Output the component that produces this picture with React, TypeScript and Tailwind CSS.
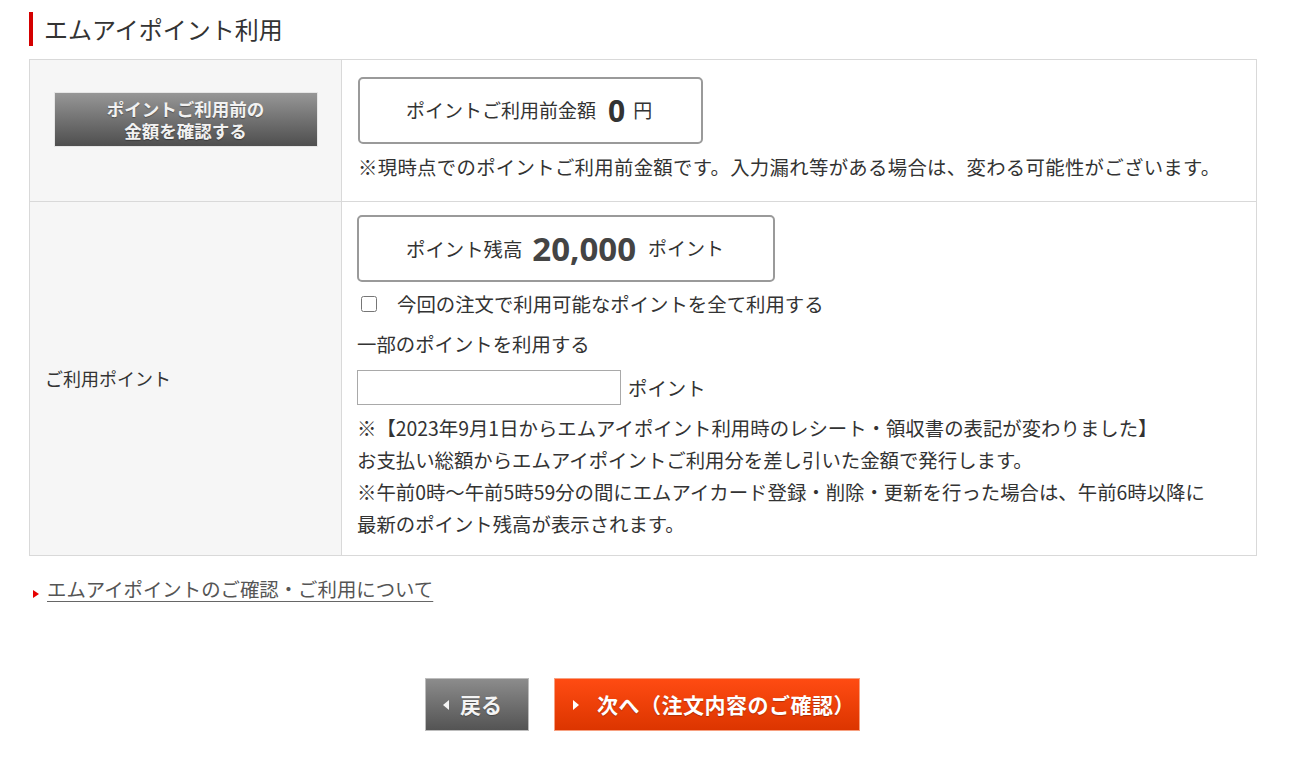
import { useState } from "react";

export default function App() {
  const [useAll, setUseAll] = useState(false);
  const [points, setPoints] = useState("");

  return (
    <div className="min-h-[763px] bg-white text-[#333] font-['Noto_Sans_CJK_JP','Noto_Sans',sans-serif]">
      <div className="pt-[12px] pl-[29px] pr-[49px]">
        {/* Title */}
        <h2 className="border-l-4 border-[#d40000] pl-[11px] h-[34px] leading-[34px] text-[24px] font-normal">
          エムアイポイント利用
        </h2>

        {/* Table */}
        <div className="mt-[13px] border border-[#d9d9d9]">
          {/* Row 1 */}
          <div className="flex border-b border-[#d9d9d9]">
            <div className="w-[312px] shrink-0 bg-[#f6f6f6] border-r border-[#d9d9d9] flex justify-center pt-[32px]">
              <button className="w-[264px] h-[55px] bg-gradient-to-b from-[#979797] to-[#4f4f4f] text-[#f2f2f2] text-[17.5px] font-bold leading-[22px] border border-[#e6e6e6] [text-shadow:0_1px_1px_rgba(0,0,0,0.35)]">
                ポイントご利用前の
                <br />
                金額を確認する
              </button>
            </div>
            <div className="flex-1 pl-[16px] pt-[17px] pb-[18px] text-[19.4px]">
              <div className="w-[345px] h-[67px] border-2 border-[#9a9a9a] rounded-[5px] flex items-center pl-[46px]">
                <span className="text-[19px]">ポイントご利用前金額</span>
                <span className="ml-[12px] text-[30px] font-bold leading-none font-['Open_Sans','Noto_Sans',sans-serif]">0</span>
                <span className="ml-[8px] text-[19px]">円</span>
              </div>
              <p className="mt-[7px] leading-[32px] tracking-[0.3px]">
                ※現時点でのポイントご利用前金額です。入力漏れ等がある場合は、変わる可能性がございます。
              </p>
            </div>
          </div>

          {/* Row 2 */}
          <div className="flex">
            <div className="w-[312px] shrink-0 bg-[#f6f6f6] border-r border-[#d9d9d9] flex items-center pl-[15px] text-[18px]">
              ご利用ポイント
            </div>
            <div className="flex-1 pl-[15px] pt-[13px] pb-[15px] text-[19.4px]">
              <div className="w-[418px] h-[67px] border-2 border-[#9a9a9a] rounded-[5px] flex items-center pl-[47px]">
                <span className="text-[19.4px]">ポイント残高</span>
                <span className="ml-[10px] text-[33px] font-bold leading-none text-[#444] font-['Open_Sans','Noto_Sans',sans-serif]">
                  20,000
                </span>
                <span className="ml-[12px] text-[19px]">ポイント</span>
              </div>
              <label className="mt-[6px] flex items-center h-[32px] pl-[4px]">
                <input
                  type="checkbox"
                  checked={useAll}
                  onChange={(e) => setUseAll(e.target.checked)}
                  className="w-[16px] h-[16px] m-0"
                />
                <span className="ml-[20px]">今回の注文で利用可能なポイントを全て利用する</span>
              </label>
              <p className="mt-[8px] leading-[32px]">一部のポイントを利用する</p>
              <div className="mt-[10px] flex items-center">
                <input
                  type="text"
                  value={points}
                  onChange={(e) => setPoints(e.target.value)}
                  className="w-[264px] h-[35px] border border-[#a9a9a9] outline-none px-2"
                />
                <span className="ml-[7px]">ポイント</span>
              </div>
              <div className="mt-[7px] leading-[32px]">
                <p>※【2023年9月1日からエムアイポイント利用時のレシート・領収書の表記が変わりました】</p>
                <p>お支払い総額からエムアイポイントご利用分を差し引いた金額で発行します。</p>
                <p>※午前0時〜午前5時59分の間にエムアイカード登録・削除・更新を行った場合は、午前6時以降に</p>
                <p>最新のポイント残高が表示されます。</p>
              </div>
            </div>
          </div>
        </div>

        {/* Link */}
        <div className="mt-[17px] flex items-center h-[32px]">
          <span className="ml-[4px] mt-[10px] w-0 h-0 border-y-[4px] border-y-transparent border-l-[6px] border-l-[#e60000]" />
          <a href="#" className="ml-[8px] text-[19.4px] text-[#555] underline underline-offset-[4px] decoration-[#666]">
            エムアイポイントのご確認・ご利用について
          </a>
        </div>

        {/* Buttons */}
        <div className="mt-[73px] ml-[396px] flex gap-[25px] items-start">
          <button className="w-[104px] h-[53px] bg-gradient-to-b from-[#8c8c8c] to-[#545454] border border-[#bdbdbd] flex items-center text-[#f4f4f4] font-bold text-[21px] [text-shadow:0_1px_1px_rgba(0,0,0,0.3)]">
            <span className="ml-[17px] w-0 h-0 border-y-[5px] border-y-transparent border-r-[6px] border-r-[#f4f4f4]" />
            <span className="ml-[11px]">戻る</span>
          </button>
          <button className="w-[306px] h-[53px] bg-gradient-to-b from-[#ff4b12] to-[#dc3500] border border-[#f7a080] flex items-center text-white font-bold text-[21px] [text-shadow:0_1px_1px_rgba(0,0,0,0.25)]">
            <span className="ml-[18px] w-0 h-0 border-y-[5px] border-y-transparent border-l-[6px] border-l-white" />
            <span className="ml-[18px] tracking-[0.5px]">次へ（注文内容のご確認）</span>
          </button>
        </div>
      </div>
    </div>
  );
}
